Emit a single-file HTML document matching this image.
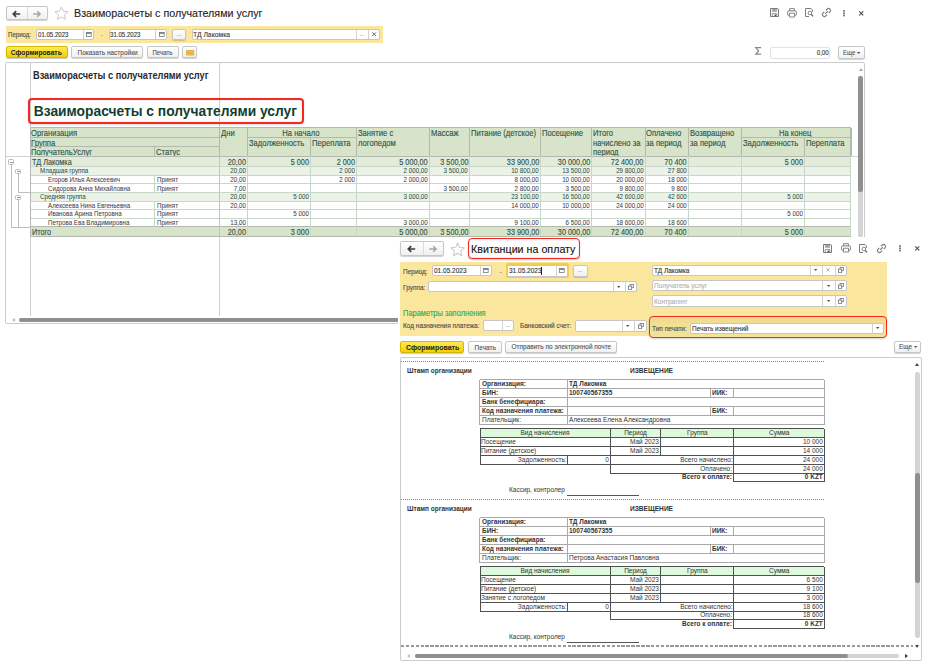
<!DOCTYPE html><html><head><meta charset="utf-8"><style>
*{box-sizing:border-box;margin:0;padding:0}
html,body{width:931px;height:667px;overflow:hidden;background:#fff;font-family:"Liberation Sans",sans-serif;color:#333}
.a{position:absolute}
.t{position:absolute;white-space:nowrap;-webkit-text-stroke:.12px currentColor}
.btn{position:absolute;border:1px solid #c6c6c6;border-radius:2px;background:linear-gradient(#fff,#f0f0f0);box-shadow:0 1px 1px rgba(0,0,0,.18)}
.ybtn{position:absolute;border:1px solid #d6b600;border-radius:2px;background:linear-gradient(#fdea55,#f3d000);box-shadow:0 1px 1px rgba(0,0,0,.22)}
.inp{position:absolute;border:1px solid #c6c6c6;border-radius:2px;background:#fff}
svg{position:absolute;overflow:visible}
</style></head><body>
<div class="btn" style="left:6.00px;top:6.20px;width:42.00px;height:14.20px"></div>
<div class="a" style="left:27.30px;top:7.20px;width:1.00px;height:12.20px;background:#dadada"></div>
<svg style="left:12.45px;top:9.600000000000001px" width="8.4" height="8" viewBox="0 0 8.4 8"><path d="M8.2 4H1.6M4.2 1.2L1.3 4 4.2 6.8" fill="none" stroke="#3c3c3c" stroke-width="1.7"/></svg>
<svg style="left:33.449999999999996px;top:9.600000000000001px" width="8.4" height="8" viewBox="0 0 8.4 8"><path d="M.2 4h6.6M4.2 1.2L7.1 4 4.2 6.8" fill="none" stroke="#a6a6a6" stroke-width="1.6"/></svg>
<svg style="left:53.6px;top:5.9px" width="14.9" height="14.9" viewBox="0 0 24 24"><path d="M12 1.5l3.1 6.9 7.4.7-5.6 5 1.7 7.4L12 17.6l-6.6 3.9 1.7-7.4-5.6-5 7.4-.7z" fill="none" stroke="#c9c9c9" stroke-width="1.6" stroke-linejoin="round"/></svg>
<div class="t" style="left:74.20px;top:3.30px;height:20px;line-height:20px;font-size:11.56px;color:#222;"><span style="display:inline-block;transform:scaleX(0.9259);transform-origin:0 50%;">Взаиморасчеты с получателями услуг</span></div>
<svg style="left:770.1px;top:8.4px" width="9" height="9" viewBox="0 0 9 9"><path d="M.5 .5h7.3l.7.7v7.3H.5z" fill="none" stroke="#7c7c7c" stroke-width="1"/><path d="M2.3 .5v2.8h4.4V.5M3.4 .8v2.2M4.5 .8v2.2M5.6 .8v2.2" fill="none" stroke="#7c7c7c" stroke-width=".7"/><path d="M2.2 8.5V5.6h4.6v2.9" fill="none" stroke="#7c7c7c" stroke-width=".8"/><rect x="4.6" y="6.6" width="1.6" height="1.6" fill="#444"/></svg>
<svg style="left:787.2px;top:7.9px" width="10" height="9.5" viewBox="0 0 10 9.5"><path d="M2.6 2.8V.6h4.8v2.2" fill="none" stroke="#7c7c7c" stroke-width=".9"/><rect x=".5" y="2.8" width="9" height="4.6" rx="1.6" fill="none" stroke="#7c7c7c" stroke-width="1"/><rect x="2.6" y="5.2" width="4.8" height="3.8" fill="#fff" stroke="#7c7c7c" stroke-width=".9"/></svg>
<svg style="left:804.7px;top:8.4px" width="9" height="9" viewBox="0 0 9 9"><path d="M6 .5H.5v8H4M6 .5l1.4 1.4v2" fill="none" stroke="#7c7c7c" stroke-width="1"/><circle cx="4.9" cy="5" r="1.8" fill="none" stroke="#7c7c7c" stroke-width=".9"/><path d="M6.1 6.3l2 2" stroke="#555" stroke-width="1.1"/></svg>
<svg style="left:821.0px;top:7.300000000000001px" width="11" height="11" viewBox="0 0 11 11"><g transform="rotate(-45 5.5 5.5)"><path d="M4.3 3.5H2.6a2 2 0 0 0 0 4h1.7M6.7 3.5h1.7a2 2 0 0 1 0 4H6.7M3.6 5.5h3.8" fill="none" stroke="#7c7c7c" stroke-width="1.15"/></g></svg>
<svg style="left:842.8px;top:9.600000000000001px" width="2" height="6.4" viewBox="0 0 2 6.4"><circle cx="1" cy=".9" r=".9" fill="#5a5a5a"/><circle cx="1" cy="3.2" r=".9" fill="#5a5a5a"/><circle cx="1" cy="5.5" r=".9" fill="#5a5a5a"/></svg>
<svg style="left:858.7px;top:10.5px" width="4.6" height="4.6" viewBox="0 0 4.6 4.6"><path d="M.3 .3l4 4M4.3 .3l-4 4" stroke="#4a4a4a" stroke-width="1.05"/></svg>
<div class="a" style="left:5.50px;top:26.00px;width:377.20px;height:16.60px;background:#fbe69e"></div>
<div class="t" style="left:8.10px;top:24.90px;height:20px;line-height:20px;font-size:7.01px;color:#4a4a4a;"><span style="display:inline-block;transform:scaleX(0.8696);transform-origin:0 50%;">Период:</span></div>
<div class="inp" style="left:36.40px;top:28.80px;width:58.00px;height:10.90px;"></div>
<div class="a" style="left:82.50px;top:29.80px;width:1.00px;height:8.90px;background:#d2d2d2"></div>
<svg style="left:85.7px;top:31.700000000000003px" width="5.6" height="5" viewBox="0 0 5.6 5"><rect x=".4" y=".4" width="4.8" height="4.2" fill="none" stroke="#777" stroke-width=".8"/><rect x=".4" y=".4" width="4.8" height="1.4" fill="#777"/></svg>
<div class="t" style="left:37.60px;top:24.90px;height:20px;line-height:20px;font-size:7.01px;color:#333;"><span style="display:inline-block;transform:scaleX(0.8696);transform-origin:0 50%;">01.05.2023</span></div>
<div class="t" style="left:101.00px;top:25.10px;height:20px;line-height:20px;font-size:6.20px;color:#777;">-</div>
<div class="inp" style="left:108.80px;top:28.80px;width:58.20px;height:10.90px;"></div>
<div class="a" style="left:155.40px;top:29.80px;width:1.00px;height:8.90px;background:#d2d2d2"></div>
<svg style="left:158.5px;top:31.700000000000003px" width="5.6" height="5" viewBox="0 0 5.6 5"><rect x=".4" y=".4" width="4.8" height="4.2" fill="none" stroke="#777" stroke-width=".8"/><rect x=".4" y=".4" width="4.8" height="1.4" fill="#777"/></svg>
<div class="t" style="left:110.00px;top:24.90px;height:20px;line-height:20px;font-size:7.01px;color:#333;"><span style="display:inline-block;transform:scaleX(0.8696);transform-origin:0 50%;">31.05.2023</span></div>
<div class="btn" style="left:172.00px;top:28.50px;width:14.30px;height:11.50px"></div>
<div class="t" style="left:-20.90px;width:400px;text-align:center;top:24.10px;height:20px;line-height:20px;font-size:5.50px;color:#999;">...</div>
<div class="inp" style="left:191.50px;top:28.60px;width:188.80px;height:11.30px;"></div>
<div class="t" style="left:193.40px;top:24.90px;height:20px;line-height:20px;font-size:7.82px;color:#3a3a3a;"><span style="display:inline-block;transform:scaleX(0.8696);transform-origin:0 50%;">ТД Лакомка</span></div>
<div class="a" style="left:355.60px;top:29.60px;width:1.00px;height:9.30px;background:#d2d2d2"></div>
<div class="a" style="left:367.90px;top:29.60px;width:1.00px;height:9.30px;background:#d2d2d2"></div>
<div class="t" style="left:161.80px;width:400px;text-align:center;top:24.10px;height:20px;line-height:20px;font-size:5.50px;color:#999;">...</div>
<svg style="left:371.8px;top:32.2px" width="4.4" height="4.4" viewBox="0 0 4.4 4.4"><path d="M.4 .4l3.6 3.6M4 .4L.4 4" stroke="#555" stroke-width=".9"/></svg>
<div class="ybtn" style="left:5.60px;top:46.30px;width:62.10px;height:12.00px"></div>
<div class="t" style="left:-163.30px;width:400px;text-align:center;top:42.90px;height:20px;line-height:20px;font-size:7.70px;color:#222;font-weight:bold;-webkit-text-stroke:0;"><span style="display:inline-block;transform:scaleX(0.8696);transform-origin:50% 50%;">Сформировать</span></div>
<div class="btn" style="left:71.30px;top:46.40px;width:71.60px;height:12.00px"></div>
<div class="t" style="left:-92.90px;width:400px;text-align:center;top:43.00px;height:20px;line-height:20px;font-size:7.47px;color:#555;"><span style="display:inline-block;transform:scaleX(0.8696);transform-origin:50% 50%;">Показать настройки</span></div>
<div class="btn" style="left:147.00px;top:46.40px;width:31.60px;height:12.00px"></div>
<div class="t" style="left:-37.20px;width:400px;text-align:center;top:43.00px;height:20px;line-height:20px;font-size:7.01px;color:#555;"><span style="display:inline-block;transform:scaleX(0.8696);transform-origin:50% 50%;">Печать</span></div>
<div class="btn" style="left:182.30px;top:46.40px;width:14.60px;height:12.00px"></div>
<svg style="left:185.6px;top:50px" width="8.2" height="5.6" viewBox="0 0 8.2 5.6"><rect width="8.2" height="5.6" rx=".8" fill="#e3a234"/><path d="M1.2 1.2h5.8v3.2H1.2z" fill="none" stroke="#f8d890" stroke-width=".6"/><path d="M1.2 1.2L4.1 3 7 1.2" fill="none" stroke="#f8d890" stroke-width=".5"/></svg>
<svg style="left:754.6px;top:47px" width="6.6" height="7.8" viewBox="0 0 6.6 7.8"><path d="M6.2 .6H.8l2.8 3.3L.8 7.2h5.4" fill="none" stroke="#7f8c98" stroke-width="1.3" stroke-linejoin="miter"/></svg>
<div class="inp" style="left:770.00px;top:47.00px;width:59.60px;height:11.60px;border-color:#e2e2e2;box-shadow:inset 0 0 1px rgba(0,0,0,.05)"></div>
<div class="t" style="left:428.20px;width:400px;text-align:right;top:43.40px;height:20px;line-height:20px;font-size:7.01px;color:#333;"><span style="display:inline-block;transform:scaleX(0.8696);transform-origin:100% 50%;">0,00</span></div>
<div class="btn" style="left:838.20px;top:46.00px;width:26.80px;height:12.60px"></div>
<div class="t" style="left:842.50px;top:43.10px;height:20px;line-height:20px;font-size:7.01px;color:#555;"><span style="display:inline-block;transform:scaleX(0.8696);transform-origin:0 50%;">Еще</span></div>
<svg style="left:857.0999999999999px;top:51.6px" width="3.4" height="2.1" viewBox="0 0 3.4 2.1"><path d="M0 0h3.4L1.7 2.1z" fill="#555"/></svg>
<div class="a" style="left:5.10px;top:62.30px;width:860.10px;height:262.20px;border:1px solid #cccccc;border-radius:2px"></div>
<div class="a" style="left:29.70px;top:63.00px;width:1.00px;height:252.50px;background:#cfcfcf"></div>
<div class="a" style="left:219.40px;top:63.00px;width:1.00px;height:252.50px;background:#d0d0d0"></div>
<div class="a" style="left:6.00px;top:155.80px;width:24.00px;height:1.00px;background:#d0d0d0"></div>
<div class="a" style="left:851.00px;top:155.80px;width:7.00px;height:1.00px;background:#d0d0d0"></div>
<div class="t" style="left:33.00px;top:64.50px;height:20px;line-height:20px;font-size:10.58px;color:#2a2a2a;font-weight:bold;-webkit-text-stroke:0;"><span style="display:inline-block;transform:scaleX(0.8696);transform-origin:0 50%;">Взаиморасчеты с получателями услуг</span></div>
<div class="a" style="left:27.80px;top:97.70px;width:276.60px;height:26.50px;border:2px solid #f22a22;border-radius:4px;box-shadow:0 1px 2px rgba(0,0,0,.15),inset 0 0 3px rgba(0,0,0,.14)"></div>
<div class="t" style="left:33.80px;top:101.80px;height:20px;line-height:20px;font-size:13.80px;color:#123e2f;font-weight:bold;-webkit-text-stroke:0;">Взаиморасчеты с получателями услуг</div>
<div class="a" style="left:30.50px;top:127.70px;width:820.40px;height:28.50px;background:#d7e4c9"></div>
<div class="t" style="left:31.30px;top:123.10px;height:20px;line-height:20px;font-size:8.57px;color:#2e5247;"><span style="display:inline-block;transform:scaleX(0.8929);transform-origin:0 50%;">Организация</span></div>
<div class="t" style="left:31.30px;top:132.60px;height:20px;line-height:20px;font-size:8.57px;color:#2e5247;"><span style="display:inline-block;transform:scaleX(0.8929);transform-origin:0 50%;">Группа</span></div>
<div class="t" style="left:31.30px;top:142.10px;height:20px;line-height:20px;font-size:8.57px;color:#2e5247;"><span style="display:inline-block;transform:scaleX(0.8929);transform-origin:0 50%;">ПолучательУслуг</span></div>
<div class="t" style="left:155.80px;top:142.10px;height:20px;line-height:20px;font-size:8.57px;color:#2e5247;"><span style="display:inline-block;transform:scaleX(0.8929);transform-origin:0 50%;">Статус</span></div>
<div class="t" style="left:221.20px;top:123.10px;height:20px;line-height:20px;font-size:8.57px;color:#2e5247;"><span style="display:inline-block;transform:scaleX(0.8929);transform-origin:0 50%;">Дни</span></div>
<div class="t" style="left:101.25px;width:400px;text-align:center;top:123.10px;height:20px;line-height:20px;font-size:8.57px;color:#2e5247;"><span style="display:inline-block;transform:scaleX(0.8929);transform-origin:50% 50%;">На начало</span></div>
<div class="t" style="left:248.70px;top:132.60px;height:20px;line-height:20px;font-size:8.57px;color:#2e5247;"><span style="display:inline-block;transform:scaleX(0.8929);transform-origin:0 50%;">Задолженность</span></div>
<div class="t" style="left:311.70px;top:132.60px;height:20px;line-height:20px;font-size:8.57px;color:#2e5247;"><span style="display:inline-block;transform:scaleX(0.8929);transform-origin:0 50%;">Переплата</span></div>
<div class="t" style="left:357.80px;top:123.10px;height:20px;line-height:20px;font-size:8.57px;color:#2e5247;"><span style="display:inline-block;transform:scaleX(0.8929);transform-origin:0 50%;">Занятие с</span></div>
<div class="t" style="left:357.80px;top:132.60px;height:20px;line-height:20px;font-size:8.57px;color:#2e5247;"><span style="display:inline-block;transform:scaleX(0.8929);transform-origin:0 50%;">логопедом</span></div>
<div class="t" style="left:430.50px;top:123.10px;height:20px;line-height:20px;font-size:8.57px;color:#2e5247;"><span style="display:inline-block;transform:scaleX(0.8929);transform-origin:0 50%;">Массаж</span></div>
<div class="t" style="left:471.00px;top:123.10px;height:20px;line-height:20px;font-size:8.57px;color:#2e5247;"><span style="display:inline-block;transform:scaleX(0.8929);transform-origin:0 50%;">Питание (детское)</span></div>
<div class="t" style="left:541.80px;top:123.10px;height:20px;line-height:20px;font-size:8.57px;color:#2e5247;"><span style="display:inline-block;transform:scaleX(0.8929);transform-origin:0 50%;">Посещение</span></div>
<div class="t" style="left:592.60px;top:123.10px;height:20px;line-height:20px;font-size:8.57px;color:#2e5247;"><span style="display:inline-block;transform:scaleX(0.8929);transform-origin:0 50%;">Итого</span></div>
<div class="t" style="left:592.60px;top:132.60px;height:20px;line-height:20px;font-size:8.57px;color:#2e5247;"><span style="display:inline-block;transform:scaleX(0.8929);transform-origin:0 50%;">начислено за</span></div>
<div class="t" style="left:592.60px;top:142.10px;height:20px;line-height:20px;font-size:8.57px;color:#2e5247;"><span style="display:inline-block;transform:scaleX(0.8929);transform-origin:0 50%;">период</span></div>
<div class="t" style="left:646.40px;top:123.10px;height:20px;line-height:20px;font-size:8.57px;color:#2e5247;"><span style="display:inline-block;transform:scaleX(0.8929);transform-origin:0 50%;">Оплачено</span></div>
<div class="t" style="left:646.40px;top:132.60px;height:20px;line-height:20px;font-size:8.57px;color:#2e5247;"><span style="display:inline-block;transform:scaleX(0.8929);transform-origin:0 50%;">за период</span></div>
<div class="t" style="left:689.70px;top:123.10px;height:20px;line-height:20px;font-size:8.57px;color:#2e5247;"><span style="display:inline-block;transform:scaleX(0.8929);transform-origin:0 50%;">Возвращено</span></div>
<div class="t" style="left:689.70px;top:132.60px;height:20px;line-height:20px;font-size:8.57px;color:#2e5247;"><span style="display:inline-block;transform:scaleX(0.8929);transform-origin:0 50%;">за период</span></div>
<div class="t" style="left:595.55px;width:400px;text-align:center;top:123.10px;height:20px;line-height:20px;font-size:8.57px;color:#2e5247;"><span style="display:inline-block;transform:scaleX(0.8929);transform-origin:50% 50%;">На конец</span></div>
<div class="t" style="left:743.00px;top:132.60px;height:20px;line-height:20px;font-size:8.57px;color:#2e5247;"><span style="display:inline-block;transform:scaleX(0.8929);transform-origin:0 50%;">Задолженность</span></div>
<div class="t" style="left:805.70px;top:132.60px;height:20px;line-height:20px;font-size:8.57px;color:#2e5247;"><span style="display:inline-block;transform:scaleX(0.8929);transform-origin:0 50%;">Переплата</span></div>
<div class="a" style="left:30.50px;top:156.20px;width:820.40px;height:10.60px;background:#e3ebda"></div>
<div class="a" style="left:30.50px;top:166.80px;width:820.40px;height:8.60px;background:#edf2e9"></div>
<div class="a" style="left:30.50px;top:175.40px;width:820.40px;height:8.50px;background:#ffffff"></div>
<div class="a" style="left:30.50px;top:183.90px;width:820.40px;height:8.60px;background:#ffffff"></div>
<div class="a" style="left:30.50px;top:192.50px;width:820.40px;height:8.50px;background:#edf2e9"></div>
<div class="a" style="left:30.50px;top:201.00px;width:820.40px;height:8.50px;background:#ffffff"></div>
<div class="a" style="left:30.50px;top:209.50px;width:820.40px;height:8.70px;background:#ffffff"></div>
<div class="a" style="left:30.50px;top:218.20px;width:820.40px;height:8.60px;background:#ffffff"></div>
<div class="a" style="left:30.50px;top:226.80px;width:820.40px;height:9.60px;background:#d7e4c9"></div>
<div class="a" style="left:30.50px;top:127.03px;width:820.40px;height:1.35px;background:#b3b9ae"></div>
<div class="a" style="left:30.50px;top:136.62px;width:189.10px;height:1.35px;background:#b3b9ae"></div>
<div class="a" style="left:30.50px;top:145.92px;width:189.10px;height:1.35px;background:#b3b9ae"></div>
<div class="a" style="left:247.50px;top:136.62px;width:109.10px;height:1.35px;background:#b3b9ae"></div>
<div class="a" style="left:741.80px;top:136.62px;width:109.10px;height:1.35px;background:#b3b9ae"></div>
<div class="a" style="left:30.50px;top:155.52px;width:820.40px;height:1.35px;background:#b3b9ae"></div>
<div class="a" style="left:29.82px;top:127.70px;width:1.35px;height:28.50px;background:#b3b9ae"></div>
<div class="a" style="left:154.12px;top:146.60px;width:1.35px;height:9.60px;background:#b3b9ae"></div>
<div class="a" style="left:218.92px;top:127.70px;width:1.35px;height:28.50px;background:#b3b9ae"></div>
<div class="a" style="left:246.82px;top:127.70px;width:1.35px;height:28.50px;background:#b3b9ae"></div>
<div class="a" style="left:309.82px;top:137.30px;width:1.35px;height:18.90px;background:#b3b9ae"></div>
<div class="a" style="left:355.93px;top:127.70px;width:1.35px;height:28.50px;background:#b3b9ae"></div>
<div class="a" style="left:428.62px;top:127.70px;width:1.35px;height:28.50px;background:#b3b9ae"></div>
<div class="a" style="left:469.12px;top:127.70px;width:1.35px;height:28.50px;background:#b3b9ae"></div>
<div class="a" style="left:539.93px;top:127.70px;width:1.35px;height:28.50px;background:#b3b9ae"></div>
<div class="a" style="left:590.73px;top:127.70px;width:1.35px;height:28.50px;background:#b3b9ae"></div>
<div class="a" style="left:644.53px;top:127.70px;width:1.35px;height:28.50px;background:#b3b9ae"></div>
<div class="a" style="left:687.83px;top:127.70px;width:1.35px;height:28.50px;background:#b3b9ae"></div>
<div class="a" style="left:741.12px;top:127.70px;width:1.35px;height:28.50px;background:#b3b9ae"></div>
<div class="a" style="left:803.83px;top:137.30px;width:1.35px;height:18.90px;background:#b3b9ae"></div>
<div class="a" style="left:850.23px;top:127.70px;width:1.35px;height:28.50px;background:#b3b9ae"></div>
<div class="a" style="left:30.50px;top:166.30px;width:820.40px;height:1.00px;background:#c8d8c8"></div>
<div class="a" style="left:30.50px;top:174.90px;width:820.40px;height:1.00px;background:#c8d8c8"></div>
<div class="a" style="left:30.50px;top:183.40px;width:820.40px;height:1.00px;background:#c8d8c8"></div>
<div class="a" style="left:30.50px;top:192.00px;width:820.40px;height:1.00px;background:#c8d8c8"></div>
<div class="a" style="left:30.50px;top:200.50px;width:820.40px;height:1.00px;background:#c8d8c8"></div>
<div class="a" style="left:30.50px;top:209.00px;width:820.40px;height:1.00px;background:#c8d8c8"></div>
<div class="a" style="left:30.50px;top:217.70px;width:820.40px;height:1.00px;background:#c8d8c8"></div>
<div class="a" style="left:30.50px;top:226.30px;width:820.40px;height:1.00px;background:#c8d8c8"></div>
<div class="a" style="left:30.50px;top:235.90px;width:820.40px;height:1.00px;background:#b3b9ae"></div>
<div class="a" style="left:30.50px;top:226.30px;width:820.40px;height:1.00px;background:#b3b9ae"></div>
<div class="a" style="left:30.00px;top:156.20px;width:1.00px;height:80.20px;background:#b3b9ae"></div>
<div class="a" style="left:154.30px;top:175.40px;width:1.00px;height:8.50px;background:#c8d8c8"></div>
<div class="a" style="left:154.30px;top:183.90px;width:1.00px;height:8.60px;background:#c8d8c8"></div>
<div class="a" style="left:154.30px;top:201.00px;width:1.00px;height:8.50px;background:#c8d8c8"></div>
<div class="a" style="left:154.30px;top:209.50px;width:1.00px;height:8.70px;background:#c8d8c8"></div>
<div class="a" style="left:154.30px;top:218.20px;width:1.00px;height:8.60px;background:#c8d8c8"></div>
<div class="a" style="left:219.00px;top:156.20px;width:1.20px;height:80.20px;background:#c2c6c0"></div>
<div class="a" style="left:247.00px;top:156.20px;width:1.00px;height:80.20px;background:#c8d8c8"></div>
<div class="a" style="left:310.00px;top:156.20px;width:1.00px;height:80.20px;background:#c8d8c8"></div>
<div class="a" style="left:356.10px;top:156.20px;width:1.00px;height:80.20px;background:#c8d8c8"></div>
<div class="a" style="left:428.80px;top:156.20px;width:1.00px;height:80.20px;background:#c8d8c8"></div>
<div class="a" style="left:469.30px;top:156.20px;width:1.00px;height:80.20px;background:#c8d8c8"></div>
<div class="a" style="left:540.10px;top:156.20px;width:1.00px;height:80.20px;background:#c8d8c8"></div>
<div class="a" style="left:590.90px;top:156.20px;width:1.00px;height:80.20px;background:#c8d8c8"></div>
<div class="a" style="left:644.70px;top:156.20px;width:1.00px;height:80.20px;background:#c8d8c8"></div>
<div class="a" style="left:688.00px;top:156.20px;width:1.00px;height:80.20px;background:#c8d8c8"></div>
<div class="a" style="left:741.30px;top:156.20px;width:1.00px;height:80.20px;background:#c8d8c8"></div>
<div class="a" style="left:804.00px;top:156.20px;width:1.00px;height:80.20px;background:#c8d8c8"></div>
<div class="a" style="left:850.40px;top:156.20px;width:1.00px;height:80.20px;background:#c8d8c8"></div>
<div class="t" style="left:32.10px;top:152.10px;height:20px;line-height:20px;font-size:8.39px;color:#2e5247;"><span style="display:inline-block;transform:scaleX(0.8696);transform-origin:0 50%;">ТД Лакомка</span></div>
<div class="t" style="left:-154.10px;width:400px;text-align:right;top:152.10px;height:20px;line-height:20px;font-size:8.39px;color:#2e5247;"><span style="display:inline-block;transform:scaleX(0.8696);transform-origin:100% 50%;">20,00</span></div>
<div class="t" style="left:-91.10px;width:400px;text-align:right;top:152.10px;height:20px;line-height:20px;font-size:8.39px;color:#2e5247;"><span style="display:inline-block;transform:scaleX(0.8696);transform-origin:100% 50%;">5 000</span></div>
<div class="t" style="left:-45.00px;width:400px;text-align:right;top:152.10px;height:20px;line-height:20px;font-size:8.39px;color:#2e5247;"><span style="display:inline-block;transform:scaleX(0.8696);transform-origin:100% 50%;">2 000</span></div>
<div class="t" style="left:27.70px;width:400px;text-align:right;top:152.10px;height:20px;line-height:20px;font-size:8.39px;color:#2e5247;"><span style="display:inline-block;transform:scaleX(0.8696);transform-origin:100% 50%;">5 000,00</span></div>
<div class="t" style="left:68.20px;width:400px;text-align:right;top:152.10px;height:20px;line-height:20px;font-size:8.39px;color:#2e5247;"><span style="display:inline-block;transform:scaleX(0.8696);transform-origin:100% 50%;">3 500,00</span></div>
<div class="t" style="left:139.00px;width:400px;text-align:right;top:152.10px;height:20px;line-height:20px;font-size:8.39px;color:#2e5247;"><span style="display:inline-block;transform:scaleX(0.8696);transform-origin:100% 50%;">33 900,00</span></div>
<div class="t" style="left:189.80px;width:400px;text-align:right;top:152.10px;height:20px;line-height:20px;font-size:8.39px;color:#2e5247;"><span style="display:inline-block;transform:scaleX(0.8696);transform-origin:100% 50%;">30 000,00</span></div>
<div class="t" style="left:243.60px;width:400px;text-align:right;top:152.10px;height:20px;line-height:20px;font-size:8.39px;color:#2e5247;"><span style="display:inline-block;transform:scaleX(0.8696);transform-origin:100% 50%;">72 400,00</span></div>
<div class="t" style="left:286.90px;width:400px;text-align:right;top:152.10px;height:20px;line-height:20px;font-size:8.39px;color:#2e5247;"><span style="display:inline-block;transform:scaleX(0.8696);transform-origin:100% 50%;">70 400</span></div>
<div class="t" style="left:402.90px;width:400px;text-align:right;top:152.10px;height:20px;line-height:20px;font-size:8.39px;color:#2e5247;"><span style="display:inline-block;transform:scaleX(0.8696);transform-origin:100% 50%;">5 000</span></div>
<div class="t" style="left:39.80px;top:161.40px;height:20px;line-height:20px;font-size:7.13px;color:#2e5247;-webkit-text-stroke:.05px currentColor"><span style="display:inline-block;transform:scaleX(0.8696);transform-origin:0 50%;">Младшая группа</span></div>
<div class="t" style="left:-154.10px;width:400px;text-align:right;top:161.40px;height:20px;line-height:20px;font-size:7.13px;color:#2e5247;-webkit-text-stroke:.05px currentColor"><span style="display:inline-block;transform:scaleX(0.8696);transform-origin:100% 50%;">20,00</span></div>
<div class="t" style="left:-45.00px;width:400px;text-align:right;top:161.40px;height:20px;line-height:20px;font-size:7.13px;color:#2e5247;-webkit-text-stroke:.05px currentColor"><span style="display:inline-block;transform:scaleX(0.8696);transform-origin:100% 50%;">2 000</span></div>
<div class="t" style="left:27.70px;width:400px;text-align:right;top:161.40px;height:20px;line-height:20px;font-size:7.13px;color:#2e5247;-webkit-text-stroke:.05px currentColor"><span style="display:inline-block;transform:scaleX(0.8696);transform-origin:100% 50%;">2 000,00</span></div>
<div class="t" style="left:68.20px;width:400px;text-align:right;top:161.40px;height:20px;line-height:20px;font-size:7.13px;color:#2e5247;-webkit-text-stroke:.05px currentColor"><span style="display:inline-block;transform:scaleX(0.8696);transform-origin:100% 50%;">3 500,00</span></div>
<div class="t" style="left:139.00px;width:400px;text-align:right;top:161.40px;height:20px;line-height:20px;font-size:7.13px;color:#2e5247;-webkit-text-stroke:.05px currentColor"><span style="display:inline-block;transform:scaleX(0.8696);transform-origin:100% 50%;">10 800,00</span></div>
<div class="t" style="left:189.80px;width:400px;text-align:right;top:161.40px;height:20px;line-height:20px;font-size:7.13px;color:#2e5247;-webkit-text-stroke:.05px currentColor"><span style="display:inline-block;transform:scaleX(0.8696);transform-origin:100% 50%;">13 500,00</span></div>
<div class="t" style="left:243.60px;width:400px;text-align:right;top:161.40px;height:20px;line-height:20px;font-size:7.13px;color:#2e5247;-webkit-text-stroke:.05px currentColor"><span style="display:inline-block;transform:scaleX(0.8696);transform-origin:100% 50%;">29 800,00</span></div>
<div class="t" style="left:286.90px;width:400px;text-align:right;top:161.40px;height:20px;line-height:20px;font-size:7.13px;color:#2e5247;-webkit-text-stroke:.05px currentColor"><span style="display:inline-block;transform:scaleX(0.8696);transform-origin:100% 50%;">27 800</span></div>
<div class="t" style="left:47.90px;top:169.95px;height:20px;line-height:20px;font-size:7.13px;color:#40404e;-webkit-text-stroke:.05px currentColor"><span style="display:inline-block;transform:scaleX(0.8696);transform-origin:0 50%;">Егоров Илья Алексеевич</span></div>
<div class="t" style="left:156.60px;top:169.95px;height:20px;line-height:20px;font-size:7.13px;color:#40404e;-webkit-text-stroke:.05px currentColor"><span style="display:inline-block;transform:scaleX(0.8696);transform-origin:0 50%;">Принят</span></div>
<div class="t" style="left:-154.10px;width:400px;text-align:right;top:169.95px;height:20px;line-height:20px;font-size:7.13px;color:#40404e;-webkit-text-stroke:.05px currentColor"><span style="display:inline-block;transform:scaleX(0.8696);transform-origin:100% 50%;">20,00</span></div>
<div class="t" style="left:-45.00px;width:400px;text-align:right;top:169.95px;height:20px;line-height:20px;font-size:7.13px;color:#40404e;-webkit-text-stroke:.05px currentColor"><span style="display:inline-block;transform:scaleX(0.8696);transform-origin:100% 50%;">2 000</span></div>
<div class="t" style="left:27.70px;width:400px;text-align:right;top:169.95px;height:20px;line-height:20px;font-size:7.13px;color:#40404e;-webkit-text-stroke:.05px currentColor"><span style="display:inline-block;transform:scaleX(0.8696);transform-origin:100% 50%;">2 000,00</span></div>
<div class="t" style="left:139.00px;width:400px;text-align:right;top:169.95px;height:20px;line-height:20px;font-size:7.13px;color:#40404e;-webkit-text-stroke:.05px currentColor"><span style="display:inline-block;transform:scaleX(0.8696);transform-origin:100% 50%;">8 000,00</span></div>
<div class="t" style="left:189.80px;width:400px;text-align:right;top:169.95px;height:20px;line-height:20px;font-size:7.13px;color:#40404e;-webkit-text-stroke:.05px currentColor"><span style="display:inline-block;transform:scaleX(0.8696);transform-origin:100% 50%;">10 000,00</span></div>
<div class="t" style="left:243.60px;width:400px;text-align:right;top:169.95px;height:20px;line-height:20px;font-size:7.13px;color:#40404e;-webkit-text-stroke:.05px currentColor"><span style="display:inline-block;transform:scaleX(0.8696);transform-origin:100% 50%;">20 000,00</span></div>
<div class="t" style="left:286.90px;width:400px;text-align:right;top:169.95px;height:20px;line-height:20px;font-size:7.13px;color:#40404e;-webkit-text-stroke:.05px currentColor"><span style="display:inline-block;transform:scaleX(0.8696);transform-origin:100% 50%;">18 000</span></div>
<div class="t" style="left:47.90px;top:178.50px;height:20px;line-height:20px;font-size:7.13px;color:#40404e;-webkit-text-stroke:.05px currentColor"><span style="display:inline-block;transform:scaleX(0.8696);transform-origin:0 50%;">Сидорова Анна Михайловна</span></div>
<div class="t" style="left:156.60px;top:178.50px;height:20px;line-height:20px;font-size:7.13px;color:#40404e;-webkit-text-stroke:.05px currentColor"><span style="display:inline-block;transform:scaleX(0.8696);transform-origin:0 50%;">Принят</span></div>
<div class="t" style="left:-154.10px;width:400px;text-align:right;top:178.50px;height:20px;line-height:20px;font-size:7.13px;color:#40404e;-webkit-text-stroke:.05px currentColor"><span style="display:inline-block;transform:scaleX(0.8696);transform-origin:100% 50%;">7,00</span></div>
<div class="t" style="left:68.20px;width:400px;text-align:right;top:178.50px;height:20px;line-height:20px;font-size:7.13px;color:#40404e;-webkit-text-stroke:.05px currentColor"><span style="display:inline-block;transform:scaleX(0.8696);transform-origin:100% 50%;">3 500,00</span></div>
<div class="t" style="left:139.00px;width:400px;text-align:right;top:178.50px;height:20px;line-height:20px;font-size:7.13px;color:#40404e;-webkit-text-stroke:.05px currentColor"><span style="display:inline-block;transform:scaleX(0.8696);transform-origin:100% 50%;">2 800,00</span></div>
<div class="t" style="left:189.80px;width:400px;text-align:right;top:178.50px;height:20px;line-height:20px;font-size:7.13px;color:#40404e;-webkit-text-stroke:.05px currentColor"><span style="display:inline-block;transform:scaleX(0.8696);transform-origin:100% 50%;">3 500,00</span></div>
<div class="t" style="left:243.60px;width:400px;text-align:right;top:178.50px;height:20px;line-height:20px;font-size:7.13px;color:#40404e;-webkit-text-stroke:.05px currentColor"><span style="display:inline-block;transform:scaleX(0.8696);transform-origin:100% 50%;">9 800,00</span></div>
<div class="t" style="left:286.90px;width:400px;text-align:right;top:178.50px;height:20px;line-height:20px;font-size:7.13px;color:#40404e;-webkit-text-stroke:.05px currentColor"><span style="display:inline-block;transform:scaleX(0.8696);transform-origin:100% 50%;">9 800</span></div>
<div class="t" style="left:39.80px;top:187.05px;height:20px;line-height:20px;font-size:7.13px;color:#2e5247;-webkit-text-stroke:.05px currentColor"><span style="display:inline-block;transform:scaleX(0.8696);transform-origin:0 50%;">Средняя группа</span></div>
<div class="t" style="left:-154.10px;width:400px;text-align:right;top:187.05px;height:20px;line-height:20px;font-size:7.13px;color:#2e5247;-webkit-text-stroke:.05px currentColor"><span style="display:inline-block;transform:scaleX(0.8696);transform-origin:100% 50%;">20,00</span></div>
<div class="t" style="left:-91.10px;width:400px;text-align:right;top:187.05px;height:20px;line-height:20px;font-size:7.13px;color:#2e5247;-webkit-text-stroke:.05px currentColor"><span style="display:inline-block;transform:scaleX(0.8696);transform-origin:100% 50%;">5 000</span></div>
<div class="t" style="left:27.70px;width:400px;text-align:right;top:187.05px;height:20px;line-height:20px;font-size:7.13px;color:#2e5247;-webkit-text-stroke:.05px currentColor"><span style="display:inline-block;transform:scaleX(0.8696);transform-origin:100% 50%;">3 000,00</span></div>
<div class="t" style="left:139.00px;width:400px;text-align:right;top:187.05px;height:20px;line-height:20px;font-size:7.13px;color:#2e5247;-webkit-text-stroke:.05px currentColor"><span style="display:inline-block;transform:scaleX(0.8696);transform-origin:100% 50%;">23 100,00</span></div>
<div class="t" style="left:189.80px;width:400px;text-align:right;top:187.05px;height:20px;line-height:20px;font-size:7.13px;color:#2e5247;-webkit-text-stroke:.05px currentColor"><span style="display:inline-block;transform:scaleX(0.8696);transform-origin:100% 50%;">16 500,00</span></div>
<div class="t" style="left:243.60px;width:400px;text-align:right;top:187.05px;height:20px;line-height:20px;font-size:7.13px;color:#2e5247;-webkit-text-stroke:.05px currentColor"><span style="display:inline-block;transform:scaleX(0.8696);transform-origin:100% 50%;">42 600,00</span></div>
<div class="t" style="left:286.90px;width:400px;text-align:right;top:187.05px;height:20px;line-height:20px;font-size:7.13px;color:#2e5247;-webkit-text-stroke:.05px currentColor"><span style="display:inline-block;transform:scaleX(0.8696);transform-origin:100% 50%;">42 600</span></div>
<div class="t" style="left:402.90px;width:400px;text-align:right;top:187.05px;height:20px;line-height:20px;font-size:7.13px;color:#2e5247;-webkit-text-stroke:.05px currentColor"><span style="display:inline-block;transform:scaleX(0.8696);transform-origin:100% 50%;">5 000</span></div>
<div class="t" style="left:47.90px;top:195.55px;height:20px;line-height:20px;font-size:7.13px;color:#40404e;-webkit-text-stroke:.05px currentColor"><span style="display:inline-block;transform:scaleX(0.8696);transform-origin:0 50%;">Алексеева Нина Евгеньевна</span></div>
<div class="t" style="left:156.60px;top:195.55px;height:20px;line-height:20px;font-size:7.13px;color:#40404e;-webkit-text-stroke:.05px currentColor"><span style="display:inline-block;transform:scaleX(0.8696);transform-origin:0 50%;">Принят</span></div>
<div class="t" style="left:-154.10px;width:400px;text-align:right;top:195.55px;height:20px;line-height:20px;font-size:7.13px;color:#40404e;-webkit-text-stroke:.05px currentColor"><span style="display:inline-block;transform:scaleX(0.8696);transform-origin:100% 50%;">20,00</span></div>
<div class="t" style="left:139.00px;width:400px;text-align:right;top:195.55px;height:20px;line-height:20px;font-size:7.13px;color:#40404e;-webkit-text-stroke:.05px currentColor"><span style="display:inline-block;transform:scaleX(0.8696);transform-origin:100% 50%;">14 000,00</span></div>
<div class="t" style="left:189.80px;width:400px;text-align:right;top:195.55px;height:20px;line-height:20px;font-size:7.13px;color:#40404e;-webkit-text-stroke:.05px currentColor"><span style="display:inline-block;transform:scaleX(0.8696);transform-origin:100% 50%;">10 000,00</span></div>
<div class="t" style="left:243.60px;width:400px;text-align:right;top:195.55px;height:20px;line-height:20px;font-size:7.13px;color:#40404e;-webkit-text-stroke:.05px currentColor"><span style="display:inline-block;transform:scaleX(0.8696);transform-origin:100% 50%;">24 000,00</span></div>
<div class="t" style="left:286.90px;width:400px;text-align:right;top:195.55px;height:20px;line-height:20px;font-size:7.13px;color:#40404e;-webkit-text-stroke:.05px currentColor"><span style="display:inline-block;transform:scaleX(0.8696);transform-origin:100% 50%;">24 000</span></div>
<div class="t" style="left:47.90px;top:204.15px;height:20px;line-height:20px;font-size:7.13px;color:#40404e;-webkit-text-stroke:.05px currentColor"><span style="display:inline-block;transform:scaleX(0.8696);transform-origin:0 50%;">Иванова Арина Петровна</span></div>
<div class="t" style="left:156.60px;top:204.15px;height:20px;line-height:20px;font-size:7.13px;color:#40404e;-webkit-text-stroke:.05px currentColor"><span style="display:inline-block;transform:scaleX(0.8696);transform-origin:0 50%;">Принят</span></div>
<div class="t" style="left:-91.10px;width:400px;text-align:right;top:204.15px;height:20px;line-height:20px;font-size:7.13px;color:#40404e;-webkit-text-stroke:.05px currentColor"><span style="display:inline-block;transform:scaleX(0.8696);transform-origin:100% 50%;">5 000</span></div>
<div class="t" style="left:402.90px;width:400px;text-align:right;top:204.15px;height:20px;line-height:20px;font-size:7.13px;color:#40404e;-webkit-text-stroke:.05px currentColor"><span style="display:inline-block;transform:scaleX(0.8696);transform-origin:100% 50%;">5 000</span></div>
<div class="t" style="left:47.90px;top:212.80px;height:20px;line-height:20px;font-size:7.13px;color:#40404e;-webkit-text-stroke:.05px currentColor"><span style="display:inline-block;transform:scaleX(0.8696);transform-origin:0 50%;">Петрова Ева Владимировна</span></div>
<div class="t" style="left:156.60px;top:212.80px;height:20px;line-height:20px;font-size:7.13px;color:#40404e;-webkit-text-stroke:.05px currentColor"><span style="display:inline-block;transform:scaleX(0.8696);transform-origin:0 50%;">Принят</span></div>
<div class="t" style="left:-154.10px;width:400px;text-align:right;top:212.80px;height:20px;line-height:20px;font-size:7.13px;color:#40404e;-webkit-text-stroke:.05px currentColor"><span style="display:inline-block;transform:scaleX(0.8696);transform-origin:100% 50%;">13,00</span></div>
<div class="t" style="left:27.70px;width:400px;text-align:right;top:212.80px;height:20px;line-height:20px;font-size:7.13px;color:#40404e;-webkit-text-stroke:.05px currentColor"><span style="display:inline-block;transform:scaleX(0.8696);transform-origin:100% 50%;">3 000,00</span></div>
<div class="t" style="left:139.00px;width:400px;text-align:right;top:212.80px;height:20px;line-height:20px;font-size:7.13px;color:#40404e;-webkit-text-stroke:.05px currentColor"><span style="display:inline-block;transform:scaleX(0.8696);transform-origin:100% 50%;">9 100,00</span></div>
<div class="t" style="left:189.80px;width:400px;text-align:right;top:212.80px;height:20px;line-height:20px;font-size:7.13px;color:#40404e;-webkit-text-stroke:.05px currentColor"><span style="display:inline-block;transform:scaleX(0.8696);transform-origin:100% 50%;">6 500,00</span></div>
<div class="t" style="left:243.60px;width:400px;text-align:right;top:212.80px;height:20px;line-height:20px;font-size:7.13px;color:#40404e;-webkit-text-stroke:.05px currentColor"><span style="display:inline-block;transform:scaleX(0.8696);transform-origin:100% 50%;">18 600,00</span></div>
<div class="t" style="left:286.90px;width:400px;text-align:right;top:212.80px;height:20px;line-height:20px;font-size:7.13px;color:#40404e;-webkit-text-stroke:.05px currentColor"><span style="display:inline-block;transform:scaleX(0.8696);transform-origin:100% 50%;">18 600</span></div>
<div class="t" style="left:32.10px;top:222.20px;height:20px;line-height:20px;font-size:8.39px;color:#2e5247;"><span style="display:inline-block;transform:scaleX(0.8696);transform-origin:0 50%;">Итого</span></div>
<div class="t" style="left:-154.10px;width:400px;text-align:right;top:222.20px;height:20px;line-height:20px;font-size:8.39px;color:#2e5247;"><span style="display:inline-block;transform:scaleX(0.8696);transform-origin:100% 50%;">20,00</span></div>
<div class="t" style="left:-91.10px;width:400px;text-align:right;top:222.20px;height:20px;line-height:20px;font-size:8.39px;color:#2e5247;"><span style="display:inline-block;transform:scaleX(0.8696);transform-origin:100% 50%;">3 000</span></div>
<div class="t" style="left:27.70px;width:400px;text-align:right;top:222.20px;height:20px;line-height:20px;font-size:8.39px;color:#2e5247;"><span style="display:inline-block;transform:scaleX(0.8696);transform-origin:100% 50%;">5 000,00</span></div>
<div class="t" style="left:68.20px;width:400px;text-align:right;top:222.20px;height:20px;line-height:20px;font-size:8.39px;color:#2e5247;"><span style="display:inline-block;transform:scaleX(0.8696);transform-origin:100% 50%;">3 500,00</span></div>
<div class="t" style="left:139.00px;width:400px;text-align:right;top:222.20px;height:20px;line-height:20px;font-size:8.39px;color:#2e5247;"><span style="display:inline-block;transform:scaleX(0.8696);transform-origin:100% 50%;">33 900,00</span></div>
<div class="t" style="left:189.80px;width:400px;text-align:right;top:222.20px;height:20px;line-height:20px;font-size:8.39px;color:#2e5247;"><span style="display:inline-block;transform:scaleX(0.8696);transform-origin:100% 50%;">30 000,00</span></div>
<div class="t" style="left:243.60px;width:400px;text-align:right;top:222.20px;height:20px;line-height:20px;font-size:8.39px;color:#2e5247;"><span style="display:inline-block;transform:scaleX(0.8696);transform-origin:100% 50%;">72 400,00</span></div>
<div class="t" style="left:286.90px;width:400px;text-align:right;top:222.20px;height:20px;line-height:20px;font-size:8.39px;color:#2e5247;"><span style="display:inline-block;transform:scaleX(0.8696);transform-origin:100% 50%;">70 400</span></div>
<div class="t" style="left:402.90px;width:400px;text-align:right;top:222.20px;height:20px;line-height:20px;font-size:8.39px;color:#2e5247;"><span style="display:inline-block;transform:scaleX(0.8696);transform-origin:100% 50%;">5 000</span></div>
<div class="a" style="left:11.00px;top:165.00px;width:1.00px;height:62.00px;background:#bdbdbd"></div>
<div class="a" style="left:11.00px;top:226.50px;width:19.50px;height:1.00px;background:#bdbdbd"></div>
<div class="a" style="left:18.30px;top:174.00px;width:1.00px;height:18.50px;background:#bdbdbd"></div>
<div class="a" style="left:18.30px;top:192.00px;width:12.00px;height:1.00px;background:#bdbdbd"></div>
<div class="a" style="left:18.30px;top:200.00px;width:1.00px;height:27.00px;background:#bdbdbd"></div>
<div class="a" style="left:8.10px;top:159.40px;width:6.00px;height:5.80px;border:1px solid #bababa;border-radius:1.5px;background:#fff"></div>
<div class="a" style="left:9.60px;top:161.80px;width:3.00px;height:1.00px;background:#9a9a9a"></div>
<div class="a" style="left:15.30px;top:168.60px;width:6.00px;height:5.80px;border:1px solid #bababa;border-radius:1.5px;background:#fff"></div>
<div class="a" style="left:16.80px;top:171.00px;width:3.00px;height:1.00px;background:#9a9a9a"></div>
<div class="a" style="left:15.30px;top:194.50px;width:6.00px;height:5.80px;border:1px solid #bababa;border-radius:1.5px;background:#fff"></div>
<div class="a" style="left:16.80px;top:196.90px;width:3.00px;height:1.00px;background:#9a9a9a"></div>
<svg style="left:858.6px;top:68.2px" width="4" height="3" viewBox="0 0 4 3"><path d="M0 3L2 0 4 3z" fill="#aaa"/></svg>
<div class="a" style="left:858.30px;top:76.40px;width:4.60px;height:161.50px;background:#d4d4d4;border-radius:2.3px"></div>
<div class="a" style="left:858.30px;top:76.40px;width:4.60px;height:116.00px;background:#8f8f8f;border-radius:2.3px"></div>
<svg style="left:11.5px;top:318.3px" width="3" height="4" viewBox="0 0 3 4"><path d="M3 0L0 2 3 4z" fill="#bbb"/></svg>
<div class="a" style="left:19.40px;top:318.00px;width:380.00px;height:4.00px;background:#8f8f8f;border-radius:2px"></div>
<div class="a" style="left:398.00px;top:237.30px;width:533.00px;height:430.00px;background:#fff"></div>
<div class="btn" style="left:400.30px;top:241.30px;width:44.10px;height:14.60px"></div>
<div class="a" style="left:422.70px;top:242.30px;width:1.00px;height:12.60px;background:#dadada"></div>
<svg style="left:407.3px;top:244.90000000000003px" width="8.4" height="8" viewBox="0 0 8.4 8"><path d="M8.2 4H1.6M4.2 1.2L1.3 4 4.2 6.8" fill="none" stroke="#3c3c3c" stroke-width="1.7"/></svg>
<svg style="left:429.35px;top:244.90000000000003px" width="8.4" height="8" viewBox="0 0 8.4 8"><path d="M.2 4h6.6M4.2 1.2L7.1 4 4.2 6.8" fill="none" stroke="#a6a6a6" stroke-width="1.6"/></svg>
<svg style="left:450px;top:241.5px" width="15.3" height="15.3" viewBox="0 0 24 24"><path d="M12 1.5l3.1 6.9 7.4.7-5.6 5 1.7 7.4L12 17.6l-6.6 3.9 1.7-7.4-5.6-5 7.4-.7z" fill="none" stroke="#c9c9c9" stroke-width="1.6" stroke-linejoin="round"/></svg>
<div class="a" style="left:468.20px;top:238.10px;width:111.50px;height:20.50px;border:1.8px solid #f22a22;border-radius:4px;background:#fff;box-shadow:0 1px 2px rgba(0,0,0,.2),inset 0 0 3px rgba(0,0,0,.16)"></div>
<div class="t" style="left:471.00px;top:239.10px;height:20px;line-height:20px;font-size:11.77px;color:#111;"><span style="display:inline-block;transform:scaleX(0.9091);transform-origin:0 50%;">Квитанции на оплату</span></div>
<svg style="left:823.2px;top:243.9px" width="9" height="9" viewBox="0 0 9 9"><path d="M.5 .5h7.3l.7.7v7.3H.5z" fill="none" stroke="#7c7c7c" stroke-width="1"/><path d="M2.3 .5v2.8h4.4V.5M3.4 .8v2.2M4.5 .8v2.2M5.6 .8v2.2" fill="none" stroke="#7c7c7c" stroke-width=".7"/><path d="M2.2 8.5V5.6h4.6v2.9" fill="none" stroke="#7c7c7c" stroke-width=".8"/><rect x="4.6" y="6.6" width="1.6" height="1.6" fill="#444"/></svg>
<svg style="left:840.8px;top:243.4px" width="10" height="9.5" viewBox="0 0 10 9.5"><path d="M2.6 2.8V.6h4.8v2.2" fill="none" stroke="#7c7c7c" stroke-width=".9"/><rect x=".5" y="2.8" width="9" height="4.6" rx="1.6" fill="none" stroke="#7c7c7c" stroke-width="1"/><rect x="2.6" y="5.2" width="4.8" height="3.8" fill="#fff" stroke="#7c7c7c" stroke-width=".9"/></svg>
<svg style="left:859px;top:243.9px" width="9" height="9" viewBox="0 0 9 9"><path d="M6 .5H.5v8H4M6 .5l1.4 1.4v2" fill="none" stroke="#7c7c7c" stroke-width="1"/><circle cx="4.9" cy="5" r="1.8" fill="none" stroke="#7c7c7c" stroke-width=".9"/><path d="M6.1 6.3l2 2" stroke="#555" stroke-width="1.1"/></svg>
<svg style="left:876.2px;top:242.8px" width="11" height="11" viewBox="0 0 11 11"><g transform="rotate(-45 5.5 5.5)"><path d="M4.3 3.5H2.6a2 2 0 0 0 0 4h1.7M6.7 3.5h1.7a2 2 0 0 1 0 4H6.7M3.6 5.5h3.8" fill="none" stroke="#7c7c7c" stroke-width="1.15"/></g></svg>
<svg style="left:898.5px;top:245.10000000000002px" width="2" height="6.4" viewBox="0 0 2 6.4"><circle cx="1" cy=".9" r=".9" fill="#5a5a5a"/><circle cx="1" cy="3.2" r=".9" fill="#5a5a5a"/><circle cx="1" cy="5.5" r=".9" fill="#5a5a5a"/></svg>
<svg style="left:914.9px;top:246.0px" width="4.6" height="4.6" viewBox="0 0 4.6 4.6"><path d="M.3 .3l4 4M4.3 .3l-4 4" stroke="#4a4a4a" stroke-width="1.05"/></svg>
<div class="a" style="left:400.30px;top:261.60px;width:486.70px;height:74.80px;background:#fbe69e"></div>
<div class="t" style="left:403.00px;top:261.60px;height:20px;line-height:20px;font-size:7.47px;color:#4a4a4a;"><span style="display:inline-block;transform:scaleX(0.8696);transform-origin:0 50%;">Период:</span></div>
<div class="inp" style="left:432.30px;top:265.00px;width:60.10px;height:11.40px;"></div>
<div class="a" style="left:480.00px;top:266.00px;width:1.00px;height:9.40px;background:#d2d2d2"></div>
<svg style="left:483.4px;top:268.2px" width="5.6" height="5" viewBox="0 0 5.6 5"><rect x=".4" y=".4" width="4.8" height="4.2" fill="none" stroke="#777" stroke-width=".8"/><rect x=".4" y=".4" width="4.8" height="1.4" fill="#777"/></svg>
<div class="t" style="left:433.60px;top:261.40px;height:20px;line-height:20px;font-size:7.47px;color:#333;"><span style="display:inline-block;transform:scaleX(0.8696);transform-origin:0 50%;">01.05.2023</span></div>
<div class="t" style="left:499.50px;top:261.60px;height:20px;line-height:20px;font-size:6.50px;color:#777;">-</div>
<div class="a" style="left:505.60px;top:263.00px;width:63.70px;height:15.30px;border:2px solid #f5cd45;border-radius:2px;background:#fff"></div>
<div class="a" style="left:507.10px;top:264.50px;width:60.70px;height:12.30px;border:1px solid #c8c8c8;border-radius:1px"></div>
<div class="t" style="left:508.50px;top:261.40px;height:20px;line-height:20px;font-size:7.47px;color:#333;"><span style="display:inline-block;transform:scaleX(0.8696);transform-origin:0 50%;">31.05.2023</span></div>
<div class="a" style="left:541.20px;top:266.60px;width:0.80px;height:8.40px;background:#222"></div>
<div class="a" style="left:555.60px;top:265.50px;width:1.00px;height:10.50px;background:#d2d2d2"></div>
<svg style="left:559.2px;top:268.2px" width="5.6" height="5" viewBox="0 0 5.6 5"><rect x=".4" y=".4" width="4.8" height="4.2" fill="none" stroke="#777" stroke-width=".8"/><rect x=".4" y=".4" width="4.8" height="1.4" fill="#777"/></svg>
<div class="btn" style="left:572.80px;top:264.60px;width:15.00px;height:12.10px"></div>
<div class="t" style="left:380.30px;width:400px;text-align:center;top:260.40px;height:20px;line-height:20px;font-size:5.50px;color:#999;">...</div>
<div class="t" style="left:403.00px;top:277.50px;height:20px;line-height:20px;font-size:7.47px;color:#4a4a4a;"><span style="display:inline-block;transform:scaleX(0.8696);transform-origin:0 50%;">Группа:</span></div>
<div class="inp" style="left:428.00px;top:281.20px;width:209.00px;height:11.10px;"></div>
<div class="a" style="left:612.80px;top:282.20px;width:1.00px;height:9.10px;background:#d2d2d2"></div>
<svg style="left:616.8px;top:285.9px" width="3.4" height="2.1" viewBox="0 0 3.4 2.1"><path d="M0 0h3.4L1.7 2.1z" fill="#555"/></svg>
<div class="a" style="left:624.60px;top:282.20px;width:1.00px;height:9.10px;background:#d2d2d2"></div>
<svg style="left:627.9px;top:283.90000000000003px" width="5.8" height="5.8" viewBox="0 0 5.8 5.8"><rect x="2.1" y=".45" width="3.25" height="3.25" fill="none" stroke="#6a6a6a" stroke-width=".75"/><rect x=".45" y="2.1" width="3.25" height="3.25" fill="#fff" stroke="#6a6a6a" stroke-width=".75"/></svg>
<div class="inp" style="left:652.10px;top:264.50px;width:194.70px;height:11.20px;"></div>
<div class="t" style="left:653.80px;top:260.70px;height:20px;line-height:20px;font-size:7.47px;color:#333;"><span style="display:inline-block;transform:scaleX(0.8696);transform-origin:0 50%;">ТД Лакомка</span></div>
<div class="a" style="left:809.50px;top:265.50px;width:1.00px;height:9.20px;background:#d2d2d2"></div>
<svg style="left:813.9px;top:269.1px" width="3.4" height="2.1" viewBox="0 0 3.4 2.1"><path d="M0 0h3.4L1.7 2.1z" fill="#555"/></svg>
<div class="a" style="left:821.80px;top:265.50px;width:1.00px;height:9.20px;background:#d2d2d2"></div>
<svg style="left:826.2px;top:268.3px" width="3.8" height="3.8" viewBox="0 0 3.8 3.8"><path d="M.3 .3l3.2 3.2M3.5 .3L.3 3.5" stroke="#999" stroke-width=".8"/></svg>
<div class="a" style="left:834.80px;top:265.50px;width:1.00px;height:9.20px;background:#d2d2d2"></div>
<svg style="left:837.9px;top:267.20000000000005px" width="5.8" height="5.8" viewBox="0 0 5.8 5.8"><rect x="2.1" y=".45" width="3.25" height="3.25" fill="none" stroke="#6a6a6a" stroke-width=".75"/><rect x=".45" y="2.1" width="3.25" height="3.25" fill="#fff" stroke="#6a6a6a" stroke-width=".75"/></svg>
<div class="inp" style="left:652.10px;top:280.00px;width:194.70px;height:11.20px;"></div>
<div class="t" style="left:653.80px;top:276.20px;height:20px;line-height:20px;font-size:7.47px;color:#b0b0b0;"><span style="display:inline-block;transform:scaleX(0.8696);transform-origin:0 50%;">Получатель услуг</span></div>
<div class="a" style="left:821.80px;top:281.00px;width:1.00px;height:9.20px;background:#d2d2d2"></div>
<svg style="left:826.5999999999999px;top:284.6px" width="3.4" height="2.1" viewBox="0 0 3.4 2.1"><path d="M0 0h3.4L1.7 2.1z" fill="#555"/></svg>
<div class="a" style="left:834.80px;top:281.00px;width:1.00px;height:9.20px;background:#d2d2d2"></div>
<svg style="left:837.9px;top:282.70000000000005px" width="5.8" height="5.8" viewBox="0 0 5.8 5.8"><rect x="2.1" y=".45" width="3.25" height="3.25" fill="none" stroke="#6a6a6a" stroke-width=".75"/><rect x=".45" y="2.1" width="3.25" height="3.25" fill="#fff" stroke="#6a6a6a" stroke-width=".75"/></svg>
<div class="inp" style="left:652.10px;top:295.40px;width:194.70px;height:11.20px;"></div>
<div class="t" style="left:653.80px;top:291.60px;height:20px;line-height:20px;font-size:7.47px;color:#b0b0b0;"><span style="display:inline-block;transform:scaleX(0.8696);transform-origin:0 50%;">Контрагент</span></div>
<div class="a" style="left:821.80px;top:296.40px;width:1.00px;height:9.20px;background:#d2d2d2"></div>
<svg style="left:826.5999999999999px;top:300.0px" width="3.4" height="2.1" viewBox="0 0 3.4 2.1"><path d="M0 0h3.4L1.7 2.1z" fill="#555"/></svg>
<div class="a" style="left:834.80px;top:296.40px;width:1.00px;height:9.20px;background:#d2d2d2"></div>
<svg style="left:837.9px;top:298.1px" width="5.8" height="5.8" viewBox="0 0 5.8 5.8"><rect x="2.1" y=".45" width="3.25" height="3.25" fill="none" stroke="#6a6a6a" stroke-width=".75"/><rect x=".45" y="2.1" width="3.25" height="3.25" fill="#fff" stroke="#6a6a6a" stroke-width=".75"/></svg>
<div class="t" style="left:403.00px;top:303.30px;height:20px;line-height:20px;font-size:8.62px;color:#2ea84f;"><span style="display:inline-block;transform:scaleX(0.8696);transform-origin:0 50%;">Параметры заполнения</span></div>
<div class="t" style="left:403.00px;top:316.40px;height:20px;line-height:20px;font-size:7.47px;color:#4a4a4a;"><span style="display:inline-block;transform:scaleX(0.8696);transform-origin:0 50%;">Код назначения платежа:</span></div>
<div class="inp" style="left:482.70px;top:319.80px;width:31.60px;height:11.20px;"></div>
<div class="a" style="left:501.80px;top:320.80px;width:1.00px;height:9.20px;background:#d2d2d2"></div>
<div class="t" style="left:308.00px;width:400px;text-align:center;top:315.30px;height:20px;line-height:20px;font-size:5.50px;color:#999;">...</div>
<div class="t" style="left:519.80px;top:316.40px;height:20px;line-height:20px;font-size:7.47px;color:#4a4a4a;"><span style="display:inline-block;transform:scaleX(0.8696);transform-origin:0 50%;">Банковский счет:</span></div>
<div class="inp" style="left:575.30px;top:320.00px;width:71.30px;height:11.50px;"></div>
<div class="a" style="left:621.60px;top:321.00px;width:1.00px;height:9.50px;background:#d2d2d2"></div>
<svg style="left:626.3px;top:324.8px" width="3.4" height="2.1" viewBox="0 0 3.4 2.1"><path d="M0 0h3.4L1.7 2.1z" fill="#555"/></svg>
<div class="a" style="left:634.40px;top:321.00px;width:1.00px;height:9.50px;background:#d2d2d2"></div>
<svg style="left:637.6px;top:322.90000000000003px" width="5.8" height="5.8" viewBox="0 0 5.8 5.8"><rect x="2.1" y=".45" width="3.25" height="3.25" fill="none" stroke="#6a6a6a" stroke-width=".75"/><rect x=".45" y="2.1" width="3.25" height="3.25" fill="#fff" stroke="#6a6a6a" stroke-width=".75"/></svg>
<div class="a" style="left:649.30px;top:316.10px;width:237.50px;height:22.30px;border:1.8px solid #f22a22;border-radius:4px;background:linear-gradient(#eed98c,#f2df95 40%,#f4e29a);box-shadow:0 1px 2px rgba(0,0,0,.18)"></div>
<div class="t" style="left:652.30px;top:319.10px;height:20px;line-height:20px;font-size:7.47px;color:#4a4a4a;"><span style="display:inline-block;transform:scaleX(0.8696);transform-origin:0 50%;">Тип печати:</span></div>
<div class="inp" style="left:689.60px;top:322.50px;width:194.20px;height:11.80px;"></div>
<div class="t" style="left:691.80px;top:319.00px;height:20px;line-height:20px;font-size:7.47px;color:#333;"><span style="display:inline-block;transform:scaleX(0.8696);transform-origin:0 50%;">Печать извещений</span></div>
<div class="a" style="left:871.90px;top:323.50px;width:1.00px;height:9.80px;background:#d2d2d2"></div>
<svg style="left:876.0999999999999px;top:327.4px" width="3.4" height="2.1" viewBox="0 0 3.4 2.1"><path d="M0 0h3.4L1.7 2.1z" fill="#555"/></svg>
<div class="ybtn" style="left:400.30px;top:340.60px;width:64.20px;height:12.20px"></div>
<div class="t" style="left:232.40px;width:400px;text-align:center;top:337.50px;height:20px;line-height:20px;font-size:8.05px;color:#222;font-weight:bold;-webkit-text-stroke:0;"><span style="display:inline-block;transform:scaleX(0.8696);transform-origin:50% 50%;">Сформировать</span></div>
<div class="btn" style="left:468.40px;top:340.60px;width:33.20px;height:12.20px"></div>
<div class="t" style="left:285.00px;width:400px;text-align:center;top:337.50px;height:20px;line-height:20px;font-size:7.47px;color:#555;"><span style="display:inline-block;transform:scaleX(0.8696);transform-origin:50% 50%;">Печать</span></div>
<div class="btn" style="left:505.40px;top:340.50px;width:111.60px;height:12.30px"></div>
<div class="t" style="left:361.10px;width:400px;text-align:center;top:337.20px;height:20px;line-height:20px;font-size:7.47px;color:#555;"><span style="display:inline-block;transform:scaleX(0.8696);transform-origin:50% 50%;">Отправить по электронной почте</span></div>
<div class="btn" style="left:894.20px;top:340.60px;width:27.20px;height:12.00px"></div>
<div class="t" style="left:899.00px;top:337.20px;height:20px;line-height:20px;font-size:7.47px;color:#555;"><span style="display:inline-block;transform:scaleX(0.8696);transform-origin:0 50%;">Еще</span></div>
<svg style="left:913.5px;top:345.8px" width="3.4" height="2.1" viewBox="0 0 3.4 2.1"><path d="M0 0h3.4L1.7 2.1z" fill="#555"/></svg>
<div class="a" style="left:399.90px;top:357.10px;width:522.00px;height:303.80px;border:1px solid #cbcbcb;border-radius:2px"></div>
<div class="a" style="left:401.00px;top:361.40px;width:423.40px;height:1.00px;background:repeating-linear-gradient(90deg,#8a8a8a 0 1px,transparent 1px 2px)"></div>
<div class="t" style="left:407.00px;top:360.90px;height:20px;line-height:20px;font-size:7.15px;color:#333;font-weight:bold;-webkit-text-stroke:0;"><span style="display:inline-block;transform:scaleX(0.9091);transform-origin:0 50%;">Штамп организации</span></div>
<div class="t" style="left:630.30px;top:360.60px;height:20px;line-height:20px;font-size:7.92px;color:#333;font-weight:bold;-webkit-text-stroke:0;"><span style="display:inline-block;transform:scaleX(0.8333);transform-origin:0 50%;">ИЗВЕЩЕНИЕ</span></div>
<div class="a" style="left:479.70px;top:379.10px;width:344.60px;height:1.00px;background:#a9a9a9"></div>
<div class="a" style="left:479.70px;top:388.10px;width:344.60px;height:1.00px;background:#a9a9a9"></div>
<div class="a" style="left:479.70px;top:397.10px;width:344.60px;height:1.00px;background:#a9a9a9"></div>
<div class="a" style="left:479.70px;top:406.10px;width:344.60px;height:1.00px;background:#a9a9a9"></div>
<div class="a" style="left:479.70px;top:415.10px;width:344.60px;height:1.00px;background:#a9a9a9"></div>
<div class="a" style="left:479.70px;top:424.10px;width:344.60px;height:1.00px;background:#a9a9a9"></div>
<div class="a" style="left:479.20px;top:379.60px;width:1.00px;height:45.00px;background:#a9a9a9"></div>
<div class="a" style="left:823.80px;top:379.60px;width:1.00px;height:45.00px;background:#a9a9a9"></div>
<div class="a" style="left:566.90px;top:379.60px;width:1.00px;height:45.00px;background:#a9a9a9"></div>
<div class="a" style="left:709.80px;top:388.60px;width:1.00px;height:9.00px;background:#a9a9a9"></div>
<div class="a" style="left:733.10px;top:388.60px;width:1.00px;height:9.00px;background:#a9a9a9"></div>
<div class="a" style="left:709.80px;top:406.60px;width:1.00px;height:9.00px;background:#a9a9a9"></div>
<div class="a" style="left:733.10px;top:406.60px;width:1.00px;height:9.00px;background:#a9a9a9"></div>
<div class="t" style="left:481.60px;top:374.00px;height:20px;line-height:20px;font-size:7.15px;color:#333;font-weight:bold;-webkit-text-stroke:0;-webkit-text-stroke:0"><span style="display:inline-block;transform:scaleX(0.9091);transform-origin:0 50%;">Организация:</span></div>
<div class="t" style="left:569.30px;top:374.00px;height:20px;line-height:20px;font-size:7.15px;color:#333;font-weight:bold;-webkit-text-stroke:0;-webkit-text-stroke:0"><span style="display:inline-block;transform:scaleX(0.9091);transform-origin:0 50%;">ТД Лакомка</span></div>
<div class="t" style="left:481.60px;top:383.00px;height:20px;line-height:20px;font-size:7.15px;color:#333;font-weight:bold;-webkit-text-stroke:0;-webkit-text-stroke:0"><span style="display:inline-block;transform:scaleX(0.9091);transform-origin:0 50%;">БИН:</span></div>
<div class="t" style="left:569.30px;top:383.00px;height:20px;line-height:20px;font-size:7.15px;color:#333;font-weight:bold;-webkit-text-stroke:0;-webkit-text-stroke:0"><span style="display:inline-block;transform:scaleX(0.9091);transform-origin:0 50%;">100740567355</span></div>
<div class="t" style="left:481.60px;top:392.00px;height:20px;line-height:20px;font-size:7.15px;color:#333;font-weight:bold;-webkit-text-stroke:0;-webkit-text-stroke:0"><span style="display:inline-block;transform:scaleX(0.9091);transform-origin:0 50%;">Банк бенефициара:</span></div>
<div class="t" style="left:481.60px;top:401.00px;height:20px;line-height:20px;font-size:7.15px;color:#333;font-weight:bold;-webkit-text-stroke:0;-webkit-text-stroke:0"><span style="display:inline-block;transform:scaleX(0.9091);transform-origin:0 50%;">Код назначения платежа:</span></div>
<div class="t" style="left:481.60px;top:410.00px;height:20px;line-height:20px;font-size:7.15px;color:#333;-webkit-text-stroke:0"><span style="display:inline-block;transform:scaleX(0.9091);transform-origin:0 50%;">Плательщик:</span></div>
<div class="t" style="left:569.30px;top:410.00px;height:20px;line-height:20px;font-size:7.15px;color:#333;-webkit-text-stroke:0"><span style="display:inline-block;transform:scaleX(0.9091);transform-origin:0 50%;">Алексеева Елена Александровна</span></div>
<div class="t" style="left:712.00px;top:383.00px;height:20px;line-height:20px;font-size:7.15px;color:#333;font-weight:bold;-webkit-text-stroke:0;"><span style="display:inline-block;transform:scaleX(0.9091);transform-origin:0 50%;">ИИК:</span></div>
<div class="t" style="left:712.00px;top:401.00px;height:20px;line-height:20px;font-size:7.15px;color:#333;font-weight:bold;-webkit-text-stroke:0;"><span style="display:inline-block;transform:scaleX(0.9091);transform-origin:0 50%;">БИК:</span></div>
<div class="a" style="left:480.00px;top:428.50px;width:344.30px;height:9.00px;background:#dcf9dc"></div>
<div class="a" style="left:480.00px;top:428.00px;width:344.30px;height:1.00px;background:#505050"></div>
<div class="a" style="left:480.00px;top:437.05px;width:344.30px;height:1.00px;background:#505050"></div>
<div class="a" style="left:480.00px;top:445.93px;width:344.30px;height:1.00px;background:#505050"></div>
<div class="a" style="left:480.00px;top:454.81px;width:344.30px;height:1.00px;background:#505050"></div>
<div class="a" style="left:480.00px;top:463.69px;width:344.30px;height:1.00px;background:#505050"></div>
<div class="a" style="left:610.40px;top:472.57px;width:213.90px;height:1.00px;background:#505050"></div>
<div class="a" style="left:733.70px;top:481.45px;width:90.60px;height:1.00px;background:#505050"></div>
<div class="a" style="left:479.50px;top:428.50px;width:1.00px;height:35.69px;background:#505050"></div>
<div class="a" style="left:823.80px;top:428.50px;width:1.00px;height:53.45px;background:#505050"></div>
<div class="a" style="left:609.90px;top:428.50px;width:1.00px;height:44.57px;background:#505050"></div>
<div class="a" style="left:733.20px;top:428.50px;width:1.00px;height:53.45px;background:#505050"></div>
<div class="a" style="left:660.00px;top:428.50px;width:1.00px;height:26.81px;background:#505050"></div>
<div class="a" style="left:567.00px;top:455.31px;width:1.00px;height:8.88px;background:#505050"></div>
<div class="t" style="left:345.20px;width:400px;text-align:center;top:422.93px;height:20px;line-height:20px;font-size:7.15px;color:#333;-webkit-text-stroke:0"><span style="display:inline-block;transform:scaleX(0.9091);transform-origin:50% 50%;">Вид начисления</span></div>
<div class="t" style="left:435.45px;width:400px;text-align:center;top:422.93px;height:20px;line-height:20px;font-size:7.15px;color:#333;-webkit-text-stroke:0"><span style="display:inline-block;transform:scaleX(0.9091);transform-origin:50% 50%;">Период</span></div>
<div class="t" style="left:497.10px;width:400px;text-align:center;top:422.93px;height:20px;line-height:20px;font-size:7.15px;color:#333;-webkit-text-stroke:0"><span style="display:inline-block;transform:scaleX(0.9091);transform-origin:50% 50%;">Группа</span></div>
<div class="t" style="left:579.00px;width:400px;text-align:center;top:422.93px;height:20px;line-height:20px;font-size:7.15px;color:#333;-webkit-text-stroke:0"><span style="display:inline-block;transform:scaleX(0.9091);transform-origin:50% 50%;">Сумма</span></div>
<div class="t" style="left:481.40px;top:431.89px;height:20px;line-height:20px;font-size:7.15px;color:#333;-webkit-text-stroke:0"><span style="display:inline-block;transform:scaleX(0.9091);transform-origin:0 50%;">Посещение</span></div>
<div class="t" style="left:259.20px;width:400px;text-align:right;top:431.89px;height:20px;line-height:20px;font-size:7.15px;color:#333;-webkit-text-stroke:0"><span style="display:inline-block;transform:scaleX(0.9091);transform-origin:100% 50%;">Май 2023</span></div>
<div class="t" style="left:422.90px;width:400px;text-align:right;top:431.89px;height:20px;line-height:20px;font-size:7.15px;color:#333;-webkit-text-stroke:0"><span style="display:inline-block;transform:scaleX(0.9091);transform-origin:100% 50%;">10 000</span></div>
<div class="t" style="left:481.40px;top:440.77px;height:20px;line-height:20px;font-size:7.15px;color:#333;-webkit-text-stroke:0"><span style="display:inline-block;transform:scaleX(0.9091);transform-origin:0 50%;">Питание (детское)</span></div>
<div class="t" style="left:259.20px;width:400px;text-align:right;top:440.77px;height:20px;line-height:20px;font-size:7.15px;color:#333;-webkit-text-stroke:0"><span style="display:inline-block;transform:scaleX(0.9091);transform-origin:100% 50%;">Май 2023</span></div>
<div class="t" style="left:422.90px;width:400px;text-align:right;top:440.77px;height:20px;line-height:20px;font-size:7.15px;color:#333;-webkit-text-stroke:0"><span style="display:inline-block;transform:scaleX(0.9091);transform-origin:100% 50%;">14 000</span></div>
<div class="t" style="left:166.20px;width:400px;text-align:right;top:449.65px;height:20px;line-height:20px;font-size:7.15px;color:#333;-webkit-text-stroke:0"><span style="display:inline-block;transform:scaleX(0.9091);transform-origin:100% 50%;">Задолженность:</span></div>
<div class="t" style="left:209.10px;width:400px;text-align:right;top:449.65px;height:20px;line-height:20px;font-size:7.15px;color:#333;-webkit-text-stroke:0"><span style="display:inline-block;transform:scaleX(0.9091);transform-origin:100% 50%;">0</span></div>
<div class="t" style="left:332.40px;width:400px;text-align:right;top:449.65px;height:20px;line-height:20px;font-size:7.15px;color:#333;-webkit-text-stroke:0"><span style="display:inline-block;transform:scaleX(0.9091);transform-origin:100% 50%;">Всего начислено:</span></div>
<div class="t" style="left:422.90px;width:400px;text-align:right;top:449.65px;height:20px;line-height:20px;font-size:7.15px;color:#333;-webkit-text-stroke:0"><span style="display:inline-block;transform:scaleX(0.9091);transform-origin:100% 50%;">24 000</span></div>
<div class="t" style="left:332.40px;width:400px;text-align:right;top:458.53px;height:20px;line-height:20px;font-size:7.15px;color:#333;-webkit-text-stroke:0"><span style="display:inline-block;transform:scaleX(0.9091);transform-origin:100% 50%;">Оплачено:</span></div>
<div class="t" style="left:422.90px;width:400px;text-align:right;top:458.53px;height:20px;line-height:20px;font-size:7.15px;color:#333;-webkit-text-stroke:0"><span style="display:inline-block;transform:scaleX(0.9091);transform-origin:100% 50%;">24 000</span></div>
<div class="t" style="left:332.40px;width:400px;text-align:right;top:467.41px;height:20px;line-height:20px;font-size:7.15px;color:#333;font-weight:bold;-webkit-text-stroke:0;-webkit-text-stroke:0"><span style="display:inline-block;transform:scaleX(0.9091);transform-origin:100% 50%;">Всего к оплате:</span></div>
<div class="t" style="left:422.90px;width:400px;text-align:right;top:467.41px;height:20px;line-height:20px;font-size:7.15px;color:#333;font-weight:bold;-webkit-text-stroke:0;-webkit-text-stroke:0"><span style="display:inline-block;transform:scaleX(0.9091);transform-origin:100% 50%;">0 KZT</span></div>
<div class="t" style="left:508.70px;top:480.45px;height:20px;line-height:20px;font-size:7.15px;color:#333;-webkit-text-stroke:0"><span style="display:inline-block;transform:scaleX(0.9091);transform-origin:0 50%;">Кассир, контролер</span></div>
<div class="a" style="left:567.00px;top:494.85px;width:71.70px;height:1.00px;background:#555"></div>
<div class="a" style="left:401.00px;top:499.40px;width:423.40px;height:1.00px;background:repeating-linear-gradient(90deg,#8a8a8a 0 1px,transparent 1px 2px)"></div>
<div class="t" style="left:407.00px;top:498.90px;height:20px;line-height:20px;font-size:7.15px;color:#333;font-weight:bold;-webkit-text-stroke:0;"><span style="display:inline-block;transform:scaleX(0.9091);transform-origin:0 50%;">Штамп организации</span></div>
<div class="t" style="left:630.30px;top:498.60px;height:20px;line-height:20px;font-size:7.92px;color:#333;font-weight:bold;-webkit-text-stroke:0;"><span style="display:inline-block;transform:scaleX(0.8333);transform-origin:0 50%;">ИЗВЕЩЕНИЕ</span></div>
<div class="a" style="left:479.70px;top:517.10px;width:344.60px;height:1.00px;background:#a9a9a9"></div>
<div class="a" style="left:479.70px;top:526.10px;width:344.60px;height:1.00px;background:#a9a9a9"></div>
<div class="a" style="left:479.70px;top:535.10px;width:344.60px;height:1.00px;background:#a9a9a9"></div>
<div class="a" style="left:479.70px;top:544.10px;width:344.60px;height:1.00px;background:#a9a9a9"></div>
<div class="a" style="left:479.70px;top:553.10px;width:344.60px;height:1.00px;background:#a9a9a9"></div>
<div class="a" style="left:479.70px;top:562.10px;width:344.60px;height:1.00px;background:#a9a9a9"></div>
<div class="a" style="left:479.20px;top:517.60px;width:1.00px;height:45.00px;background:#a9a9a9"></div>
<div class="a" style="left:823.80px;top:517.60px;width:1.00px;height:45.00px;background:#a9a9a9"></div>
<div class="a" style="left:566.90px;top:517.60px;width:1.00px;height:45.00px;background:#a9a9a9"></div>
<div class="a" style="left:709.80px;top:526.60px;width:1.00px;height:9.00px;background:#a9a9a9"></div>
<div class="a" style="left:733.10px;top:526.60px;width:1.00px;height:9.00px;background:#a9a9a9"></div>
<div class="a" style="left:709.80px;top:544.60px;width:1.00px;height:9.00px;background:#a9a9a9"></div>
<div class="a" style="left:733.10px;top:544.60px;width:1.00px;height:9.00px;background:#a9a9a9"></div>
<div class="t" style="left:481.60px;top:512.00px;height:20px;line-height:20px;font-size:7.15px;color:#333;font-weight:bold;-webkit-text-stroke:0;-webkit-text-stroke:0"><span style="display:inline-block;transform:scaleX(0.9091);transform-origin:0 50%;">Организация:</span></div>
<div class="t" style="left:569.30px;top:512.00px;height:20px;line-height:20px;font-size:7.15px;color:#333;font-weight:bold;-webkit-text-stroke:0;-webkit-text-stroke:0"><span style="display:inline-block;transform:scaleX(0.9091);transform-origin:0 50%;">ТД Лакомка</span></div>
<div class="t" style="left:481.60px;top:521.00px;height:20px;line-height:20px;font-size:7.15px;color:#333;font-weight:bold;-webkit-text-stroke:0;-webkit-text-stroke:0"><span style="display:inline-block;transform:scaleX(0.9091);transform-origin:0 50%;">БИН:</span></div>
<div class="t" style="left:569.30px;top:521.00px;height:20px;line-height:20px;font-size:7.15px;color:#333;font-weight:bold;-webkit-text-stroke:0;-webkit-text-stroke:0"><span style="display:inline-block;transform:scaleX(0.9091);transform-origin:0 50%;">100740567355</span></div>
<div class="t" style="left:481.60px;top:530.00px;height:20px;line-height:20px;font-size:7.15px;color:#333;font-weight:bold;-webkit-text-stroke:0;-webkit-text-stroke:0"><span style="display:inline-block;transform:scaleX(0.9091);transform-origin:0 50%;">Банк бенефициара:</span></div>
<div class="t" style="left:481.60px;top:539.00px;height:20px;line-height:20px;font-size:7.15px;color:#333;font-weight:bold;-webkit-text-stroke:0;-webkit-text-stroke:0"><span style="display:inline-block;transform:scaleX(0.9091);transform-origin:0 50%;">Код назначения платежа:</span></div>
<div class="t" style="left:481.60px;top:548.00px;height:20px;line-height:20px;font-size:7.15px;color:#333;-webkit-text-stroke:0"><span style="display:inline-block;transform:scaleX(0.9091);transform-origin:0 50%;">Плательщик:</span></div>
<div class="t" style="left:569.30px;top:548.00px;height:20px;line-height:20px;font-size:7.15px;color:#333;-webkit-text-stroke:0"><span style="display:inline-block;transform:scaleX(0.9091);transform-origin:0 50%;">Петрова Анастасия Павловна</span></div>
<div class="t" style="left:712.00px;top:521.00px;height:20px;line-height:20px;font-size:7.15px;color:#333;font-weight:bold;-webkit-text-stroke:0;"><span style="display:inline-block;transform:scaleX(0.9091);transform-origin:0 50%;">ИИК:</span></div>
<div class="t" style="left:712.00px;top:539.00px;height:20px;line-height:20px;font-size:7.15px;color:#333;font-weight:bold;-webkit-text-stroke:0;"><span style="display:inline-block;transform:scaleX(0.9091);transform-origin:0 50%;">БИК:</span></div>
<div class="a" style="left:480.00px;top:566.50px;width:344.30px;height:9.00px;background:#dcf9dc"></div>
<div class="a" style="left:480.00px;top:566.00px;width:344.30px;height:1.00px;background:#505050"></div>
<div class="a" style="left:480.00px;top:575.05px;width:344.30px;height:1.00px;background:#505050"></div>
<div class="a" style="left:480.00px;top:583.93px;width:344.30px;height:1.00px;background:#505050"></div>
<div class="a" style="left:480.00px;top:592.81px;width:344.30px;height:1.00px;background:#505050"></div>
<div class="a" style="left:480.00px;top:601.69px;width:344.30px;height:1.00px;background:#505050"></div>
<div class="a" style="left:480.00px;top:610.57px;width:344.30px;height:1.00px;background:#505050"></div>
<div class="a" style="left:610.40px;top:619.45px;width:213.90px;height:1.00px;background:#505050"></div>
<div class="a" style="left:733.70px;top:628.33px;width:90.60px;height:1.00px;background:#505050"></div>
<div class="a" style="left:479.50px;top:566.50px;width:1.00px;height:44.57px;background:#505050"></div>
<div class="a" style="left:823.80px;top:566.50px;width:1.00px;height:62.33px;background:#505050"></div>
<div class="a" style="left:609.90px;top:566.50px;width:1.00px;height:53.45px;background:#505050"></div>
<div class="a" style="left:733.20px;top:566.50px;width:1.00px;height:62.33px;background:#505050"></div>
<div class="a" style="left:660.00px;top:566.50px;width:1.00px;height:35.69px;background:#505050"></div>
<div class="a" style="left:567.00px;top:602.19px;width:1.00px;height:8.88px;background:#505050"></div>
<div class="t" style="left:345.20px;width:400px;text-align:center;top:560.92px;height:20px;line-height:20px;font-size:7.15px;color:#333;-webkit-text-stroke:0"><span style="display:inline-block;transform:scaleX(0.9091);transform-origin:50% 50%;">Вид начисления</span></div>
<div class="t" style="left:435.45px;width:400px;text-align:center;top:560.92px;height:20px;line-height:20px;font-size:7.15px;color:#333;-webkit-text-stroke:0"><span style="display:inline-block;transform:scaleX(0.9091);transform-origin:50% 50%;">Период</span></div>
<div class="t" style="left:497.10px;width:400px;text-align:center;top:560.92px;height:20px;line-height:20px;font-size:7.15px;color:#333;-webkit-text-stroke:0"><span style="display:inline-block;transform:scaleX(0.9091);transform-origin:50% 50%;">Группа</span></div>
<div class="t" style="left:579.00px;width:400px;text-align:center;top:560.92px;height:20px;line-height:20px;font-size:7.15px;color:#333;-webkit-text-stroke:0"><span style="display:inline-block;transform:scaleX(0.9091);transform-origin:50% 50%;">Сумма</span></div>
<div class="t" style="left:481.40px;top:569.89px;height:20px;line-height:20px;font-size:7.15px;color:#333;-webkit-text-stroke:0"><span style="display:inline-block;transform:scaleX(0.9091);transform-origin:0 50%;">Посещение</span></div>
<div class="t" style="left:259.20px;width:400px;text-align:right;top:569.89px;height:20px;line-height:20px;font-size:7.15px;color:#333;-webkit-text-stroke:0"><span style="display:inline-block;transform:scaleX(0.9091);transform-origin:100% 50%;">Май 2023</span></div>
<div class="t" style="left:422.90px;width:400px;text-align:right;top:569.89px;height:20px;line-height:20px;font-size:7.15px;color:#333;-webkit-text-stroke:0"><span style="display:inline-block;transform:scaleX(0.9091);transform-origin:100% 50%;">6 500</span></div>
<div class="t" style="left:481.40px;top:578.77px;height:20px;line-height:20px;font-size:7.15px;color:#333;-webkit-text-stroke:0"><span style="display:inline-block;transform:scaleX(0.9091);transform-origin:0 50%;">Питание (детское)</span></div>
<div class="t" style="left:259.20px;width:400px;text-align:right;top:578.77px;height:20px;line-height:20px;font-size:7.15px;color:#333;-webkit-text-stroke:0"><span style="display:inline-block;transform:scaleX(0.9091);transform-origin:100% 50%;">Май 2023</span></div>
<div class="t" style="left:422.90px;width:400px;text-align:right;top:578.77px;height:20px;line-height:20px;font-size:7.15px;color:#333;-webkit-text-stroke:0"><span style="display:inline-block;transform:scaleX(0.9091);transform-origin:100% 50%;">9 100</span></div>
<div class="t" style="left:481.40px;top:587.65px;height:20px;line-height:20px;font-size:7.15px;color:#333;-webkit-text-stroke:0"><span style="display:inline-block;transform:scaleX(0.9091);transform-origin:0 50%;">Занятие с логопедом</span></div>
<div class="t" style="left:259.20px;width:400px;text-align:right;top:587.65px;height:20px;line-height:20px;font-size:7.15px;color:#333;-webkit-text-stroke:0"><span style="display:inline-block;transform:scaleX(0.9091);transform-origin:100% 50%;">Май 2023</span></div>
<div class="t" style="left:422.90px;width:400px;text-align:right;top:587.65px;height:20px;line-height:20px;font-size:7.15px;color:#333;-webkit-text-stroke:0"><span style="display:inline-block;transform:scaleX(0.9091);transform-origin:100% 50%;">3 000</span></div>
<div class="t" style="left:166.20px;width:400px;text-align:right;top:596.53px;height:20px;line-height:20px;font-size:7.15px;color:#333;-webkit-text-stroke:0"><span style="display:inline-block;transform:scaleX(0.9091);transform-origin:100% 50%;">Задолженность:</span></div>
<div class="t" style="left:209.10px;width:400px;text-align:right;top:596.53px;height:20px;line-height:20px;font-size:7.15px;color:#333;-webkit-text-stroke:0"><span style="display:inline-block;transform:scaleX(0.9091);transform-origin:100% 50%;">0</span></div>
<div class="t" style="left:332.40px;width:400px;text-align:right;top:596.53px;height:20px;line-height:20px;font-size:7.15px;color:#333;-webkit-text-stroke:0"><span style="display:inline-block;transform:scaleX(0.9091);transform-origin:100% 50%;">Всего начислено:</span></div>
<div class="t" style="left:422.90px;width:400px;text-align:right;top:596.53px;height:20px;line-height:20px;font-size:7.15px;color:#333;-webkit-text-stroke:0"><span style="display:inline-block;transform:scaleX(0.9091);transform-origin:100% 50%;">18 600</span></div>
<div class="t" style="left:332.40px;width:400px;text-align:right;top:605.41px;height:20px;line-height:20px;font-size:7.15px;color:#333;-webkit-text-stroke:0"><span style="display:inline-block;transform:scaleX(0.9091);transform-origin:100% 50%;">Оплачено:</span></div>
<div class="t" style="left:422.90px;width:400px;text-align:right;top:605.41px;height:20px;line-height:20px;font-size:7.15px;color:#333;-webkit-text-stroke:0"><span style="display:inline-block;transform:scaleX(0.9091);transform-origin:100% 50%;">18 600</span></div>
<div class="t" style="left:332.40px;width:400px;text-align:right;top:614.29px;height:20px;line-height:20px;font-size:7.15px;color:#333;font-weight:bold;-webkit-text-stroke:0;-webkit-text-stroke:0"><span style="display:inline-block;transform:scaleX(0.9091);transform-origin:100% 50%;">Всего к оплате:</span></div>
<div class="t" style="left:422.90px;width:400px;text-align:right;top:614.29px;height:20px;line-height:20px;font-size:7.15px;color:#333;font-weight:bold;-webkit-text-stroke:0;-webkit-text-stroke:0"><span style="display:inline-block;transform:scaleX(0.9091);transform-origin:100% 50%;">0 KZT</span></div>
<div class="t" style="left:508.70px;top:627.33px;height:20px;line-height:20px;font-size:7.15px;color:#333;-webkit-text-stroke:0"><span style="display:inline-block;transform:scaleX(0.9091);transform-origin:0 50%;">Кассир, контролер</span></div>
<div class="a" style="left:567.00px;top:641.73px;width:71.70px;height:1.00px;background:#555"></div>
<div class="a" style="left:401.00px;top:645.20px;width:512.00px;height:1.60px;background:repeating-linear-gradient(90deg,#9a9a9a 0 3.5px,transparent 3.5px 4.9px)"></div>
<svg style="left:915.3px;top:363.2px" width="4" height="3" viewBox="0 0 4 3"><path d="M0 3L2 0 4 3z" fill="#444"/></svg>
<div class="a" style="left:915.20px;top:371.80px;width:4.40px;height:266.00px;background:#d4d4d4;border-radius:2.2px"></div>
<div class="a" style="left:915.20px;top:472.70px;width:4.40px;height:110.00px;background:#8f8f8f;border-radius:2.2px"></div>
<svg style="left:915.3px;top:644.6px" width="4" height="3" viewBox="0 0 4 3"><path d="M0 0L2 3 4 0z" fill="#444"/></svg>
<svg style="left:406.5px;top:654.3px" width="3" height="4" viewBox="0 0 3 4"><path d="M3 0L0 2 3 4z" fill="#bbb"/></svg>
<div class="a" style="left:414.90px;top:654.40px;width:484.00px;height:4.00px;background:#d4d4d4;border-radius:2px"></div>
<div class="a" style="left:414.90px;top:654.40px;width:433.20px;height:4.00px;background:#8f8f8f;border-radius:2px"></div>
<svg style="left:905.2px;top:654.3px" width="3" height="4" viewBox="0 0 3 4"><path d="M0 0L3 2 0 4z" fill="#333"/></svg>
</body></html>
